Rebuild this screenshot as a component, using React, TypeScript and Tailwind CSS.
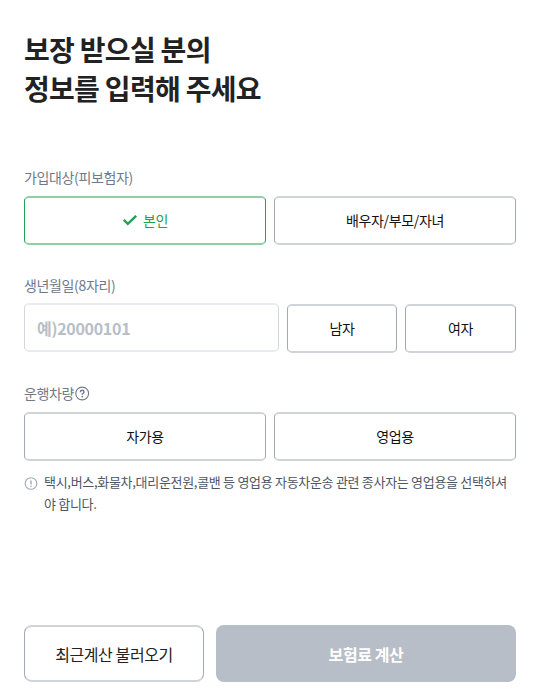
const fieldLabel = 'flex items-center text-[14px] leading-[20px] tracking-tight text-[#70798a]';
const optionButton = 'flex h-[49px] items-center justify-center rounded-[5px] border border-y-2 border-x-[#a2a9b4] border-y-[#d0d4d9] bg-white text-[14px] tracking-tight text-[#111111]';

export default function App() {
  return (
    <main className="flex h-[693px] w-[536px] flex-col bg-white pl-6 pr-5 font-['Noto_Sans_CJK_KR',sans-serif]">
      <h1 className="mt-[30px] text-[28px] leading-[39px] font-bold tracking-tight text-[#222222]">
        보장 받으실 분의
        <br />
        정보를 입력해 주세요
      </h1>

      {/* Insured person */}
      <section className="mt-[59px]">
        <p className={fieldLabel}>가입대상(피보험자)</p>
        <div className="mt-[9px] grid grid-cols-2 gap-2">
          <button className="flex h-[49px] items-center justify-center gap-1.5 rounded-[5px] border border-y-2 border-x-[#22a053] border-y-[#8fcfa8] bg-white pl-px text-[14px] tracking-tight text-[#22a053]">
            <svg width="14" height="12" viewBox="0 0 14 12" fill="none">
              <path d="M0.8 4.8L4.8 8.8L13.2 0.8" stroke="currentColor" strokeWidth="2.4" />
            </svg>
            본인
          </button>
          <button className={optionButton}>배우자/부모/자녀</button>
        </div>
      </section>

      {/* Birth date and gender */}
      <section className="mt-[30px]">
        <p className={fieldLabel}>생년월일(8자리)</p>
        <div className="mt-2 grid grid-cols-[255px_110px_111px] items-start gap-x-2">
          <input
            className="h-[49px] rounded-[5px] border border-y-2 border-x-[#d5d9de] border-y-[#e8ebef] px-3 text-[16px] font-bold tracking-[-0.3px] text-[#222222] outline-none placeholder:text-[#b7bec7]"
            placeholder="예)20000101"
          />
          <button className={`${optionButton} mt-px`}>남자</button>
          <button className={`${optionButton} mt-px`}>여자</button>
        </div>
      </section>

      {/* Vehicle use */}
      <section className="mt-[30px]">
        <p className={fieldLabel}>
          운행차량
          <svg className="ml-px" width="15" height="15" viewBox="0 0 15 15" fill="none" stroke="currentColor">
            <circle cx="7.2" cy="7.5" r="6.4" strokeWidth="1.1" />
            <path d="M5.4 6.2C5.4 3.6 9 3.8 9 6C9 7.2 7.2 7.3 7.2 8.8" strokeWidth="1.4" />
            <circle cx="7.2" cy="10.6" r="0.85" fill="currentColor" stroke="none" />
          </svg>
        </p>
        <div className="mt-[9px] grid grid-cols-2 gap-2">
          <button className={optionButton}>자가용</button>
          <button className={optionButton}>영업용</button>
        </div>
        <div className="mt-[10px] flex">
          <svg className="mt-[6px] mr-[6px] shrink-0 text-[#a2a9b4]" width="14" height="14" viewBox="0 0 14 14" fill="none" stroke="currentColor">
            <circle cx="7" cy="6.5" r="5.8" strokeWidth="1.1" />
            <path d="M7 3.4V7.5" strokeWidth="1.4" />
            <path d="M7 8.7V9.9" strokeWidth="1.4" />
          </svg>
          <p className="text-[13px] leading-[22px] tracking-[-0.3px] text-[#4e5663]">
            택시,버스,화물차,대리운전원,콜밴 등 영업용 자동차운송 관련 종사자는 영업용을 선택하셔야 합니다.
          </p>
        </div>
      </section>

      <div className="mt-auto mb-[11px] flex gap-3">
        <button className="h-[57px] w-[180px] rounded-lg border border-y-2 border-x-[#a2a9b4] border-y-[#d0d4d9] text-[16px] tracking-tight text-[#222222]">최근계산 불러오기</button>
        <button className="h-[57px] w-[300px] rounded-lg bg-[#b7bec7] text-[16px] font-bold tracking-tight text-white">보험료 계산</button>
      </div>
    </main>
  );
}
